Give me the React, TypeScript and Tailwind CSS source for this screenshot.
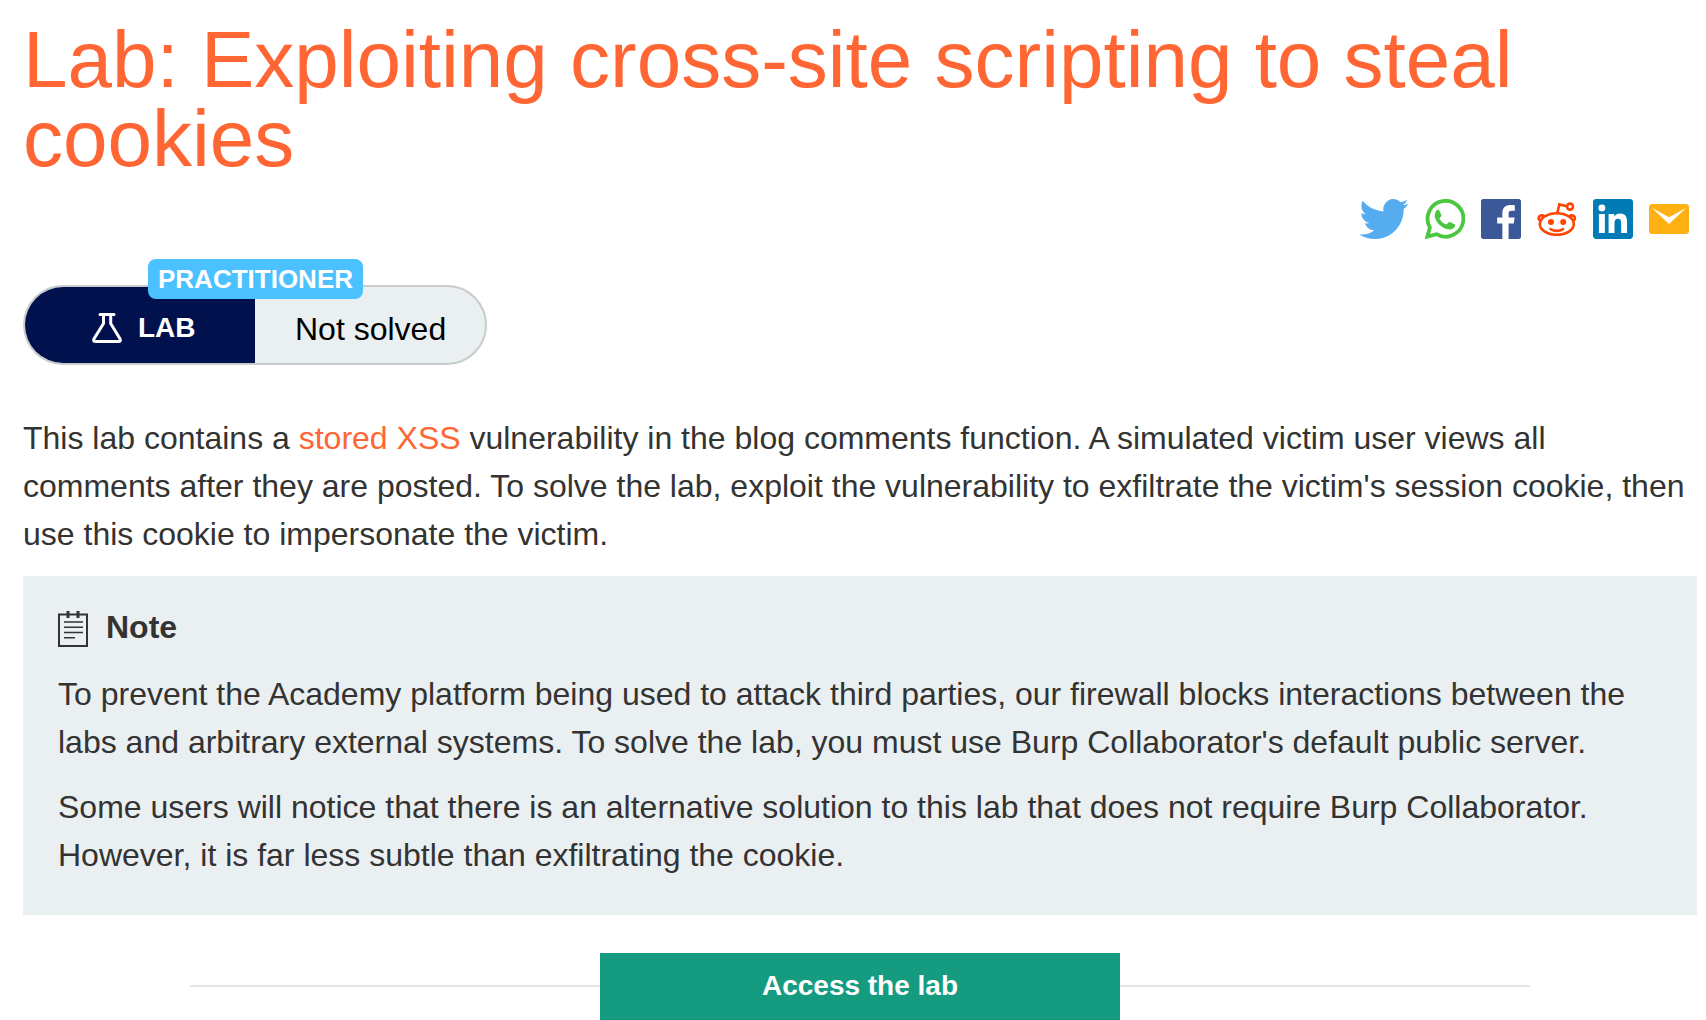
const twitterPath =
  "M23.953 4.57a10 10 0 01-2.825.775 4.958 4.958 0 002.163-2.723c-.951.555-2.005.959-3.127 1.184a4.92 4.92 0 00-8.384 4.482C7.69 8.095 4.067 6.13 1.64 3.162a4.822 4.822 0 00-.666 2.475c0 1.71.87 3.213 2.188 4.096a4.904 4.904 0 01-2.228-.616v.06a4.923 4.923 0 003.946 4.827 4.996 4.996 0 01-2.212.085 4.936 4.936 0 004.604 3.417 9.867 9.867 0 01-6.102 2.105c-.39 0-.779-.023-1.17-.067a13.995 13.995 0 007.557 2.209c9.053 0 13.998-7.496 13.998-13.985 0-.21 0-.42-.015-.63A9.935 9.935 0 0024 4.59z";
const facebookPath =
  "M22.676 0H1.324C.593 0 0 .593 0 1.324v21.352C0 23.408.593 24 1.324 24h11.494v-9.294H9.689v-3.621h3.129V8.41c0-3.099 1.894-4.785 4.659-4.785 1.325 0 2.464.097 2.796.141v3.24h-1.921c-1.5 0-1.792.721-1.792 1.771v2.311h3.584l-.465 3.63H16.56V24h6.115c.733 0 1.325-.592 1.325-1.324V1.324C24 .593 23.408 0 22.676 0";
const linkedinPath =
  "M20.447 20.452h-3.554v-5.569c0-1.328-.027-3.037-1.852-3.037-1.853 0-2.136 1.445-2.136 2.939v5.667H9.351V9h3.414v1.561h.046c.477-.9 1.637-1.85 3.37-1.85 3.601 0 4.267 2.37 4.267 5.455v6.286zM5.337 7.433a2.062 2.062 0 01-2.063-2.065 2.064 2.064 0 112.063 2.065zm1.782 13.019H3.555V9h3.564v11.452zM22.225 0H1.771C.792 0 0 .774 0 1.729v20.542C0 23.227.792 24 1.771 24h20.451C23.2 24 24 23.227 24 22.271V1.729C24 .774 23.2 0 22.222 0h.003z";

function ShareLinks() {
  return (
    <nav aria-label="Share" className="mt-[21px] flex justify-end gap-4 pr-2">
      <a href="#twitter" aria-label="Twitter">
        <svg viewBox="0 2.25 24 19.5" className="h-10 w-[50px]" fill="#55acee">
          <path d={twitterPath} />
        </svg>
      </a>
      <a href="#whatsapp" aria-label="WhatsApp">
        <svg viewBox="0 0 40 40" className="size-10">
          <path
            d="M2.4 37.6 4.9 28.6A17.9 17.9 0 1 1 11.4 35.2Z"
            fill="none"
            stroke="#4ac73f"
            strokeWidth="3.8"
          />
          <path
            d="M12.4 10.8c.9-.1 1.7-.1 2.2 1.1l1.7 4.1c.3.9-.4 1.8-1.9 3.400 1.500 2.800 3.800 4.900 6.900 6.200 1.500-1.100 2.200-2.900 3.300-2.700.8.100 3.900 1.600 5.100 2.300 1 .6.200 5.100-5.200 5.300-6.600-.1-14.500-7.200-14.800-13.700 0-3.300 1.600-5.300 2.700-6Z"
            fill="#4ac73f"
          />
        </svg>
      </a>
      <a href="#facebook" aria-label="Facebook">
        <svg viewBox="0 0 24 24" className="size-10" fill="#3b5998">
          <path d={facebookPath} />
        </svg>
      </a>
      <a href="#reddit" aria-label="Reddit">
        <svg viewBox="0 0 40 40" className="size-10" fill="none" stroke="#ff4500" strokeWidth="2.6">
          <ellipse cx="19.8" cy="25" rx="17" ry="10.800" />
          <path d="M2.900 21.600C-.6 18.300 3.800 14.800 7.600 17.500M36.700 21.600C40.200 18.300 35.800 14.800 32 17.500" />
          <path d="M20.300 14 22.300 5.400 29.800 7.300" />
          <circle cx="33" cy="7.600" r="3" />
          <path d="M13.500 30.200q6.300 3.400 12.600 0" strokeLinecap="round" />
          <circle cx="14" cy="23" r="3" fill="#ff4500" stroke="none" />
          <circle cx="26.200" cy="23" r="3" fill="#ff4500" stroke="none" />
        </svg>
      </a>
      <a href="#linkedin" aria-label="LinkedIn">
        <svg viewBox="0 0 24 24" className="size-10" fill="#007bb6">
          <path d={linkedinPath} />
        </svg>
      </a>
      <a href="#email" aria-label="Email">
        <svg viewBox="0 0 40 40" className="size-10">
          <rect y="5" width="40" height="30" rx="3.500" fill="#ffb013" />
          <path d="M3 9 20 18.300 37 9 20 25Z" fill="#fff" />
        </svg>
      </a>
    </nav>
  );
}

function LabStatus() {
  return (
    <div className="relative mt-[46px] flex h-20 w-[464px] rounded-full border-2 border-[#c8cccd] bg-[#eaeff2] leading-none">
      <div className="flex w-[230px] items-center rounded-l-full bg-[#00114e] pl-[67px] pt-[6px] text-[28px] leading-none font-bold text-white">
        <svg
          viewBox="0 0 30 32"
          className="mr-4 h-8 w-[30px]"
          fill="none"
          stroke="#fff"
          strokeWidth="3"
          strokeLinecap="round"
          strokeLinejoin="round"
          aria-hidden="true"
        >
          <path d="M8 2.500h14M11.500 3v8.500L2.200 26.500q-1.500 3 1.500 3h22.600q3 0 1.500-3L18.700 11.500V3" />
        </svg>
        <span>LAB</span>
      </div>
      <div className="flex flex-1 items-center pl-10 pt-2 text-[32px] leading-none text-black">Not solved</div>
      <span className="absolute -top-7 left-[123px] flex h-10 items-center rounded-lg bg-[#4cc1ff] px-[10px] text-[26px] leading-none font-bold text-white">
        PRACTITIONER
      </span>
    </div>
  );
}

function NoteIcon() {
  return (
    <svg viewBox="0 0 30 36" className="h-9 w-[30px]" fill="none" stroke="#333332" strokeWidth="2" aria-hidden="true">
      <path d="M1 3.500h28V35H1Z" />
      <path d="M10 0v7M20 0v7" strokeWidth="3" />
      <path d="M6 11h19M6 16.300h19M6 21.500h19M6 26.700h11" strokeWidth="1.500" />
    </svg>
  );
}

export default function App() {
  return (
    <main className="bg-white pb-px pl-[23px] pr-[9px] pt-5 font-['Liberation_Sans',Arial,sans-serif] text-[32px] leading-[48px] text-[#333332]">
      <h1 className="text-[80px] leading-[79px] text-[#ff6633]">
        Lab: Exploiting cross-site scripting to steal cookies
      </h1>
      <ShareLinks />
      <LabStatus />
      <p className="mt-[49px]">
        This lab contains a{" "}
        <a href="#stored-xss" className="text-[#ff6633]">
          stored XSS
        </a>{" "}
        vulnerability in the blog comments function. A simulated victim user views all comments after they are posted.
        To solve the lab, exploit the vulnerability to exfiltrate the victim's session cookie, then use this cookie to
        impersonate the victim.
      </p>
      <section className="mt-[18px] bg-[#eaeff2] px-[35px] pb-9 pt-[35px]">
        <h2 className="flex items-start gap-[18px] font-bold leading-8">
          <NoteIcon />
          Note
        </h2>
        <p className="mt-[23px]">
          To prevent the Academy platform being used to attack third parties, our firewall blocks interactions between
          the labs and arbitrary external systems. To solve the lab, you must use Burp Collaborator's default public
          server.
        </p>
        <p className="mt-[17px]">
          Some users will notice that there is an alternative solution to this lab that does not require Burp
          Collaborator. However, it is far less subtle than exfiltrating the cookie.
        </p>
      </section>
      <div className="mx-auto mt-[38px] flex w-4/5 items-center">
        <hr className="flex-1 border-t-2 border-[#e5e5e5]" />
        <button
          type="button"
          className="h-[66px] w-[520px] bg-[#159c80] text-[28px] font-bold text-white shadow-[0_1px_0_#138f75]"
        >
          Access the lab
        </button>
        <hr className="flex-1 border-t-2 border-[#e5e5e5]" />
      </div>
    </main>
  );
}
